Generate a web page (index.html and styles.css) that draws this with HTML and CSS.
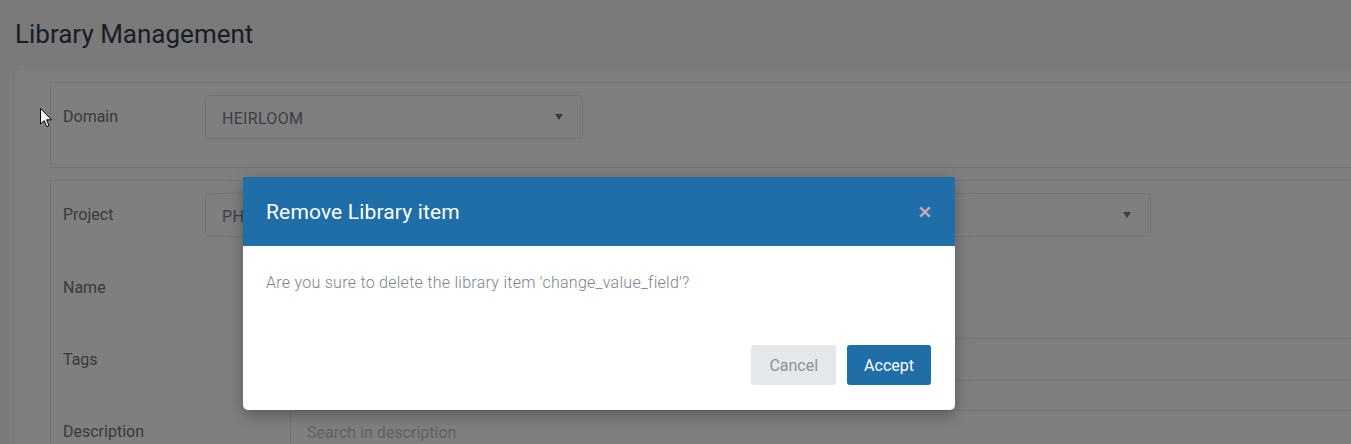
FILE: index.html
```html
<!DOCTYPE html>
<html lang="en">
<head>
<meta charset="utf-8">
<title>Library Management</title>
<link rel="stylesheet" href="styles.css">
</head>
<body>
<div class="page">
  <h1 class="title">Library Management</h1>
  <div class="card">
    <div class="box box-domain">
      <div class="row">
        <div class="lbl lbl-short">Domain</div>
        <div class="select sel-domain"><span class="sel-text">HEIRLOOM</span><span class="caret"></span></div>
      </div>
    </div>
    <div class="box box-project">
      <div class="row">
        <div class="lbl lbl-short">Project</div>
        <div class="select sel-project"><span class="sel-text">PHX</span><span class="caret"></span></div>
      </div>
      <div class="row">
        <div class="lbl lbl-long">Name</div>
        <div class="field field-plain"></div>
      </div>
      <div class="row">
        <div class="lbl lbl-long">Tags</div>
        <div class="field field-input"></div>
      </div>
      <div class="row">
        <div class="lbl lbl-long">Description</div>
        <div class="field field-input"><span class="placeholder">Search in description</span></div>
      </div>
    </div>
  </div>
</div>

<div class="overlay"></div>

<div class="modal">
  <div class="modal-header">
    <h2 class="modal-title">Remove Library item</h2>
    <span class="modal-close">
      <svg width="12" height="12" viewBox="0 0 12 12" xmlns="http://www.w3.org/2000/svg">
        <path d="M1.3 1.3 L10.7 10.7 M10.7 1.3 L1.3 10.7" stroke="#c4a3b2" stroke-width="2.6" stroke-linecap="butt"/>
      </svg>
    </span>
  </div>
  <div class="modal-body">
    <p class="modal-text">Are you sure to delete the library item 'change_value_field'?</p>
  </div>
  <div class="modal-footer">
    <button class="btn btn-cancel">Cancel</button>
    <button class="btn btn-accept">Accept</button>
  </div>
</div>

<svg class="cursor" width="13" height="20" viewBox="0 0 13 20" xmlns="http://www.w3.org/2000/svg">
  <path d="M0.5 0.5 L0.5 16 L4.2 12.6 L6.8 18.6 L9 17.6 L6.5 11.8 L11.5 11.8 Z" fill="#ffffff" stroke="#000000" stroke-width="1" stroke-linejoin="round"/>
</svg>
</body>
</html>
```

FILE: styles.css
```css
html, body {
  margin: 0;
  padding: 0;
}

body {
  width: 1351px;
  height: 444px;
  overflow: hidden;
  background: #f4f4f4;
  font-family: Roboto, "Liberation Sans", Arial, sans-serif;
  position: relative;
}

.page {
  display: flex;
  flex-direction: column;
}

.title {
  margin: 0;
  padding: 19px 15px 0;
  height: 51px;
  font-size: 26px;
  line-height: 30px;
  font-weight: 400;
  color: #313d4c;
}

.card {
  margin-left: 15px;
  width: 1400px;
  height: 400px;
  background: #ffffff;
  border-radius: 6px 0 0 0;
  padding: 12px 0 0 35px;
  box-sizing: border-box;
  display: flex;
  flex-direction: column;
  gap: 12px;
}

.box {
  border: 1px solid #e8e8e8;
  padding: 12px;
  display: flex;
  flex-direction: column;
  gap: 29px;
}

.box-domain {
  padding-bottom: 28px;
}

.row {
  display: flex;
  align-items: flex-start;
}

.lbl {
  padding-top: 10px;
  font-size: 16px;
  line-height: 24px;
  color: #747474;
  flex: none;
}

.lbl-short {
  width: 142px;
}

.lbl-long {
  width: 227px;
}

.select {
  height: 44px;
  box-sizing: border-box;
  border: 1px solid #e6e6e6;
  border-radius: 4px;
  display: flex;
  align-items: center;
  justify-content: space-between;
  padding: 0 19px 0 16px;
}

.sel-domain {
  width: 378px;
}

.sel-project {
  width: 946px;
}

.sel-text {
  font-size: 16px;
  letter-spacing: 0.3px;
  color: #76808c;
  padding-top: 2px;
}

.caret {
  width: 0;
  height: 0;
  border-left: 4px solid transparent;
  border-right: 4px solid transparent;
  border-top: 6px solid #777777;
}

.field {
  flex: 1;
  height: 43px;
  box-sizing: border-box;
  border-radius: 4px;
  display: flex;
  align-items: center;
  padding: 0 16px;
}

.field-input {
  border: 1px solid #e8e8e8;
}

.placeholder {
  font-size: 16px;
  color: #bcc3ca;
  padding-top: 2px;
}

.cursor {
  position: absolute;
  left: 40px;
  top: 108px;
}

.overlay {
  position: absolute;
  inset: 0;
  background: rgba(0, 0, 0, 0.5);
}

.modal {
  position: absolute;
  left: 243px;
  top: 177px;
  width: 712px;
  background: #ffffff;
  border-radius: 0 0 5px 5px;
  box-shadow: 0 5px 15px rgba(0, 0, 0, 0.3);
  overflow: hidden;
}

.modal-header {
  height: 69px;
  background: #1f6ea8;
  display: flex;
  align-items: center;
  justify-content: space-between;
  padding: 0 24px 0 23px;
}

.modal-title {
  margin: 0;
  font-size: 21px;
  font-weight: 400;
  letter-spacing: 0.15px;
  color: #ffffff;
  line-height: 24px;
}

.modal-close {
  display: flex;
  width: 12px;
  height: 12px;
  margin-top: 1px;
}

.modal-body {
  padding: 25px 23px 0;
}

.modal-text {
  margin: 0;
  font-size: 16px;
  font-weight: 300;
  letter-spacing: 0.27px;
  line-height: 24px;
  color: #7b8490;
}

.modal-footer {
  display: flex;
  justify-content: flex-end;
  gap: 11px;
  padding: 50px 24px 25px;
}

.btn {
  height: 40px;
  border: none;
  border-radius: 3px;
  padding: 0 17px;
  font-family: Roboto, "Liberation Sans", Arial, sans-serif;
  font-size: 16px;
  cursor: pointer;
}

.btn-cancel {
  background: #e5e8eb;
  color: #8a919a;
  padding: 0 18px;
}

.btn-accept {
  background: #1f6ea8;
  color: #ffffff;
}
```
